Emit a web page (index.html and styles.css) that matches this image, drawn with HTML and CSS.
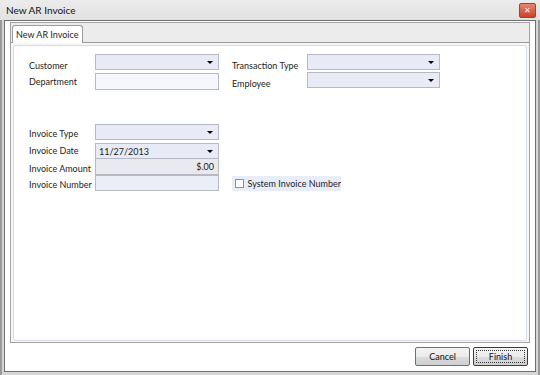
FILE: index.html
```html
<!DOCTYPE html>
<html lang="en">
<head>
    <meta charset="UTF-8">
    <title>New AR Invoice</title>
    <link rel="stylesheet" href="styles.css">
</head>
<body>
    <div class="window">
        <div class="titlebar">
            <span class="title">New AR Invoice</span>
            <span class="close">&#x2715;</span>
        </div>
        <div class="client">
            <div class="tabpanel">
                <div class="tabstrip">
                    <div class="tab">New AR Invoice</div>
                </div>
                <div class="tabbody">
                    <div class="content">
                        <div class="top">
                            <div class="group">
                                <div class="row r1">
                                    <label class="lower">Customer</label>
                                    <div class="field combo"><span class="arrow"></span></div>
                                </div>
                                <div class="row r2">
                                    <label class="mid">Department</label>
                                    <div class="field text tall"></div>
                                </div>
                            </div>
                            <div class="group right">
                                <div class="row r1">
                                    <label class="lower">Transaction Type</label>
                                    <div class="field combo wide"><span class="arrow"></span></div>
                                </div>
                                <div class="row r2b">
                                    <label class="lower">Employee</label>
                                    <div class="field combo wide"><span class="arrow"></span></div>
                                </div>
                            </div>
                        </div>

                        <div class="invoice">
                            <div class="row">
                                <label class="low">Invoice Type</label>
                                <div class="field combo"><span class="arrow"></span></div>
                            </div>
                            <div class="row gap">
                                <label>Invoice Date</label>
                                <div class="field combo"><span class="value">11/27/2013</span><span class="arrow"></span></div>
                            </div>
                            <div class="row">
                                <label class="low">Invoice Amount</label>
                                <div class="field amount"><span class="value">$.00</span></div>
                            </div>
                            <div class="row">
                                <label class="low">Invoice Number</label>
                                <div class="field number"></div>
                                <div class="check">
                                    <span class="box"></span>
                                    <span>System Invoice Number</span>
                                </div>
                            </div>
                        </div>
                    </div>
                </div>
            </div>
            <div class="footer">
                <button class="btn">Cancel</button>
                <button class="btn default"><span>Finish</span></button>
            </div>
        </div>
    </div>
</body>
</html>
```

FILE: styles.css
```css
body {
    margin: 0;
    font-family: Lato, "Open Sans", sans-serif;
    font-size: 9px;
    color: #1e1e1e;
    background: #fff;
}
.window {
    width: 540px;
    height: 375px;
    box-sizing: border-box;
    background: #d6d6d6;
    border-left: 2px solid #9a9a9a;
    border-right: 2px solid #9a9a9a;
    padding: 0 2px 3px 2px;
    display: flex;
    flex-direction: column;
}
.titlebar {
    height: 20px;
    margin: 0 -4px;
    padding: 0 4px 0 6px;
    background: linear-gradient(#ececec, #e2e2e2);
    display: flex;
    align-items: center;
    justify-content: space-between;
}
.title {
    font-size: 10px;
    color: #111;
}
.close {
    width: 15px;
    height: 13px;
    background: linear-gradient(#e9846f, #c8432b);
    border: 1px solid #a2412f;
    border-radius: 2px;
    color: #fff;
    font-size: 8px;
    line-height: 13px;
    text-align: center;
}
.client {
    flex: 1;
    background: #fff;
    border: 1px solid #6f6f6f;
    padding: 1px 5px 0 5px;
    display: flex;
    flex-direction: column;
}
.tabpanel {
    height: 321px;
    box-sizing: border-box;
    border: 1px solid #a3a3a3;
    background: #ececec;
    display: flex;
    flex-direction: column;
}
.tabstrip {
    height: 19px;
    padding-left: 1px;
    display: flex;
    align-items: flex-end;
}
.tab {
    height: 18px;
    box-sizing: border-box;
    margin-bottom: -1px;
    padding: 0 3px;
    background: #fff;
    border: 1px solid #9c9c9c;
    border-bottom: none;
    border-radius: 3px 3px 0 0;
    line-height: 17px;
    position: relative;
}
.tabbody {
    flex: 1;
    border-top: 1px solid #9c9c9c;
    background: #f7f7f7;
    padding: 2px 2px 1px 2px;
    display: flex;
}
.content {
    flex: 1;
    background: #fff;
    border: 1px solid #d8dce8;
    border-radius: 3px;
    padding: 8px 0 0 15px;
}
.top {
    display: flex;
    gap: 13px;
}
.group {
    display: flex;
    flex-direction: column;
}
.row {
    display: flex;
    align-items: flex-start;
}
.row label {
    width: 66px;
    height: 16px;
    line-height: 16px;
    white-space: nowrap;
}
.row label.low {
    line-height: 20px;
}
.row label.lower {
    line-height: 24px;
}
.row label.mid {
    line-height: 18px;
}
.right .row label {
    width: 75px;
}
.r2 {
    margin-top: 3px;
}
.r2b {
    margin-top: 2px;
}
.field {
    width: 124px;
    height: 16px;
    box-sizing: border-box;
    border: 1px solid #b7bac6;
    background: #e8ebf6;
    display: flex;
    align-items: center;
    position: relative;
}
.field.wide {
    width: 133px;
}
.field.tall {
    height: 17px;
    background: #f6f7fc;
}
.field .value {
    padding-left: 3px;
    color: #222;
}
.arrow {
    position: absolute;
    right: 5px;
    top: 6px;
    border-left: 3px solid transparent;
    border-right: 3px solid transparent;
    border-top: 3px solid #000;
}
.invoice {
    margin-top: 34px;
    display: flex;
    flex-direction: column;
}
.invoice .gap {
    margin-top: 3px;
}
.field.amount {
    background: #e9eaef;
    justify-content: flex-end;
    padding-right: 4px;
    border-top: none;
}
.field.amount .value {
    padding: 0;
}
.field.number {
    background: #eceef7;
}
.check {
    margin-left: 13px;
    margin-top: 1px;
    width: 109px;
    height: 15px;
    background: #e9edf8;
    display: flex;
    align-items: center;
    gap: 4px;
    padding-left: 3px;
    box-sizing: border-box;
    white-space: nowrap;
}
.box {
    width: 7px;
    height: 7px;
    border: 1px solid #8f8f8f;
    background: #fff;
}
.footer {
    display: flex;
    justify-content: flex-end;
    gap: 3px;
    margin-top: 4px;
    padding-right: 2px;
}
.btn {
    width: 55px;
    height: 19px;
    font-family: Lato, "Open Sans", sans-serif;
    font-size: 9px;
    color: #111;
    border: 1px solid #707070;
    border-radius: 2px;
    background: linear-gradient(#f4f4f4 0%, #ebebeb 50%, #dddddd 51%, #cfcfcf 100%);
    padding: 0;
}
.btn.default {
    border-color: #3c3c3c;
    padding: 2px;
}
.btn.default span {
    display: block;
    height: 100%;
    box-sizing: border-box;
    border: 1px dotted #333;
    line-height: 11px;
}
```
